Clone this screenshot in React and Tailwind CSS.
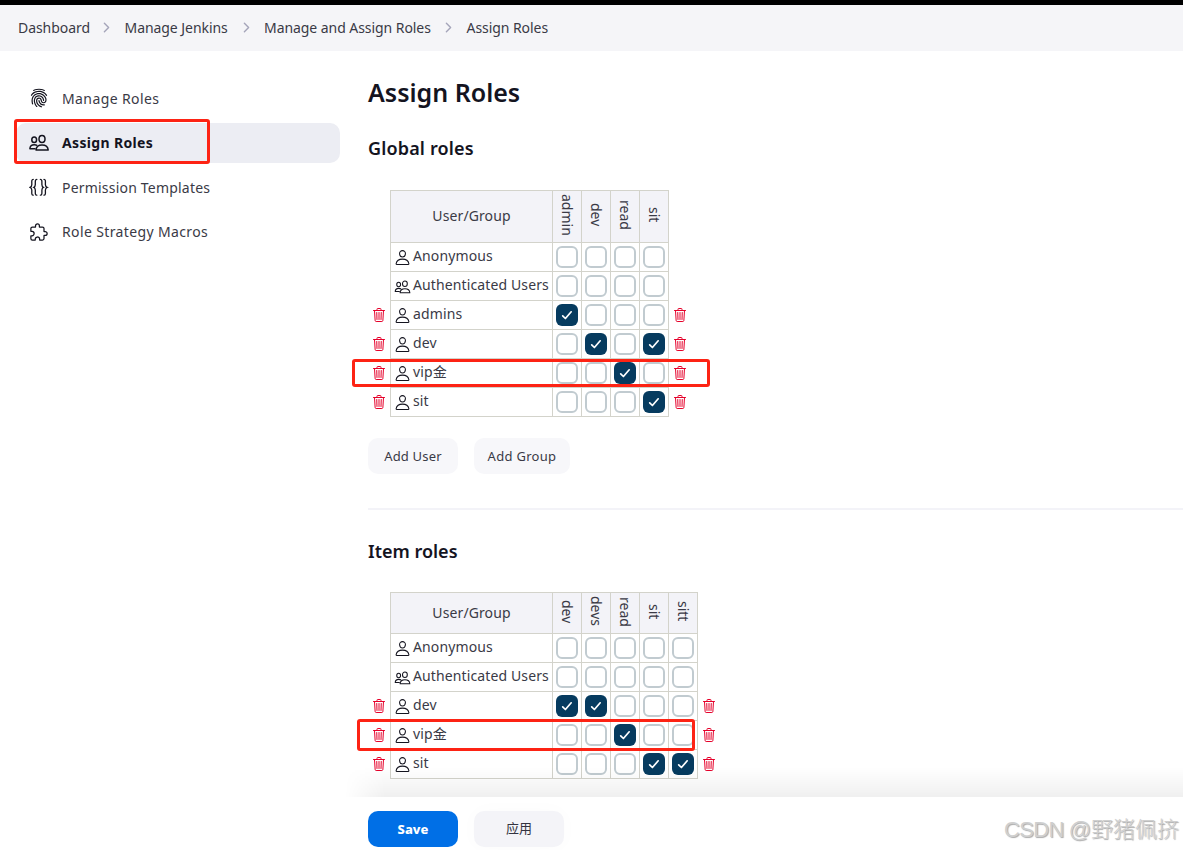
import React from 'react';
import {
  IoChevronForward,
  IoExtensionPuzzleOutline,
  IoFingerPrint,
  IoPersonOutline,
  IoTrashOutline,
} from 'react-icons/io5';

const crumbs = [
  { label: 'Dashboard', width: 'w-[71px]' },
  { label: 'Manage Jenkins', width: 'w-[104px]' },
  { label: 'Manage and Assign Roles', width: 'w-[167px]' },
  { label: 'Assign Roles', width: 'w-[82px]' },
];

const globalRoles = {
  roles: ['admin', 'dev', 'read', 'sit'],
  rows: [
    { name: 'Anonymous', builtin: true, checked: [] },
    { name: 'Authenticated Users', builtin: true, group: true, checked: [] },
    { name: 'admins', checked: ['admin'] },
    { name: 'dev', checked: ['dev', 'sit'] },
    { name: 'vip金', checked: ['read'], outline: 'left-[-16px] top-0 w-[358px] h-[28px]' },
    { name: 'sit', checked: ['sit'] },
  ],
};

const itemRoles = {
  roles: ['dev', 'devs', 'read', 'sit', 'sitt'],
  rows: [
    { name: 'Anonymous', builtin: true, checked: [] },
    { name: 'Authenticated Users', builtin: true, group: true, checked: [] },
    { name: 'dev', checked: ['dev', 'devs'] },
    { name: 'vip金', checked: ['read'], outline: 'left-[-11px] top-[-2px] w-[338px] h-[32px]' },
    { name: 'sit', checked: ['sit', 'sitt'] },
  ],
};

const BracesIcon = ({ className }) => (
  <svg viewBox="0 0 20 20" fill="none" stroke="currentColor" strokeWidth="1.3" strokeLinecap="round" className={className}>
    <path d="M4.2 2.4C2.2 2.4 2.9 5.2 2.8 7.6C2.7 9.2 2.2 9.9 1.1 10.3C2.2 10.7 2.7 11.4 2.8 13C2.9 15.4 2.2 18.2 4.2 18.2" />
    <path d="M7.8 2.4C5.8 2.4 6.4 5.2 6.3 7.6C6.2 9.2 5.8 9.9 4.9 10.3C5.8 10.7 6.2 11.4 6.3 13C6.4 15.4 5.8 18.2 7.8 18.2" />
    <path d="M11.4 2.4C13.4 2.4 12.8 5.2 12.9 7.6C13 9.2 13.4 9.9 14.3 10.3C13.4 10.7 13 11.4 12.9 13C12.8 15.4 13.4 18.2 11.4 18.2" />
    <path d="M15 2.4C17 2.4 16.3 5.2 16.4 7.6C16.5 9.2 17 9.9 18.1 10.3C17 10.7 16.5 11.4 16.4 13C16.3 15.4 17 18.2 15 18.2" />
  </svg>
);

const UsersIcon = ({ className, strokeWidth = 1.5 }) => (
  <svg viewBox="0 0 20 20" fill="none" stroke="currentColor" strokeWidth={strokeWidth} strokeLinejoin="round" className={className}>
    <ellipse cx="13" cy="6" rx="3" ry="3.5" />
    <ellipse cx="5.2" cy="6.8" rx="2.4" ry="2.8" />
    <path d="M7 17.1C7.2 14 9.6 12.1 13 12.1S19 14 19.2 17.1Z" />
    <path d="M6.6 15.7H0.9C1 13.1 2.9 11.7 5.2 11.7C6.4 11.7 7.4 11.9 8.3 12.5" />
  </svg>
);

const Outline = ({ className }) => (
  <div className={`absolute z-10 rounded-[3px] border-3 border-[#fd2314] pointer-events-none ${className}`} />
);

const TaskLink = ({ icon, label, active, tracking = 'tracking-[0.4px]' }) => (
  <a
    className={`relative flex items-center h-10 pl-[13px] gap-[13px] rounded-[10px] text-[14px] ${tracking} ${
      active ? 'bg-[#ecedf3] font-bold text-[#14141f]' : 'text-[#3a3a46]'
    }`}
  >
    <span className="w-5 h-5 text-[#14141f]">{icon}</span>
    <span className="whitespace-nowrap">{label}</span>
    {active && <Outline className="-left-[2px] top-[-4px] w-[196px] h-[45px]" />}
  </a>
);

const RoleCheckbox = ({ checked }) =>
  checked ? (
    <span className="w-[22px] h-[22px] rounded-[6px] bg-[#063b5f] flex items-center justify-center">
      <svg viewBox="0 0 22 22" fill="none" stroke="white" strokeWidth="1.7" strokeLinecap="round" strokeLinejoin="round" className="w-[22px] h-[22px]">
        <path d="M6.7 11.8L9.4 14.5L15.2 7.8" />
      </svg>
    </span>
  ) : (
    <span className="w-[22px] h-[22px] rounded-[6px] border-2 border-[#c1cbd0] bg-white" />
  );

const Trash = ({ hidden }) => (
  <div className="w-[22px] pb-px flex items-center justify-center text-[#e6002a]">
    {!hidden && <IoTrashOutline className="w-4 h-4" />}
  </div>
);

const RoleTable = ({ data, headerClass }) => (
  <div className="flex flex-col">
    <div className={`flex pl-[22px] text-[#3a3a46] ${headerClass}`}>
      <div className="w-[163px] pb-0.5 border border-[#d3d3cb] bg-[#f3f3f8] flex items-center justify-center text-[14px] tracking-[0.1px]">
        User/Group
      </div>
      {data.roles.map((role) => (
        <div key={role} className="w-[29px] pb-[3px] border-y border-r border-[#d3d3cb] bg-[#f3f3f8] flex items-center justify-center">
          <span className="[writing-mode:vertical-rl] text-[14px] leading-[20px]">{role}</span>
        </div>
      ))}
    </div>
    {data.rows.map((row) => (
      <div key={row.name} className="relative flex h-[29px]">
        <Trash hidden={row.builtin} />
        <div className="w-[163px] border-x border-b border-[#d3d3cb] flex items-center pl-[3px] gap-[2px] text-[#3a3a46]">
          {row.group ? (
            <UsersIcon className="w-[17px] h-4 text-[#14141f] mt-0.5 shrink-0" strokeWidth={1.3} />
          ) : (
            <IoPersonOutline className="w-[17px] h-[17px] text-[#14141f] shrink-0" />
          )}
          <span className="pb-0.5 text-[14px] leading-5 tracking-[0.12px] whitespace-nowrap">{row.name}</span>
        </div>
        {data.roles.map((role) => (
          <div key={role} className="w-[29px] border-r border-b border-[#d3d3cb] flex items-center justify-center">
            <RoleCheckbox checked={row.checked.includes(role)} />
          </div>
        ))}
        <Trash hidden={row.builtin} />
        {row.outline && <Outline className={row.outline} />}
      </div>
    ))}
  </div>
);

const App = () => {
  return (
    <div className="relative w-[1183px] h-[850px] overflow-hidden bg-white flex flex-col font-['Noto_Sans','Noto_Sans_CJK_SC',sans-serif] text-[#14141f]">
      <nav className="h-[51px] shrink-0 border-t-5 border-black bg-[#f5f5f8] flex items-center pl-[18px] pb-0.5 text-[14px] text-[#3a3a46]">
        {crumbs.map((crumb, i) => (
          <React.Fragment key={crumb.label}>
            {i > 0 && (
              <span className="w-[35.5px] flex justify-center">
                <IoChevronForward className="w-[15px] h-[15px] text-[#a5a5ba]" />
              </span>
            )}
            <a className={`${crumb.width} whitespace-nowrap tracking-[-0.06px]`}>{crumb.label}</a>
          </React.Fragment>
        ))}
      </nav>

      <div className="flex flex-1 min-h-0">
        <aside className="w-[368px] shrink-0 pl-4 pr-7 pt-[27px] flex flex-col gap-[4.5px]">
          <TaskLink icon={<IoFingerPrint className="w-5 h-5" />} label="Manage Roles" />
          <TaskLink icon={<UsersIcon className="w-5 h-5" />} label="Assign Roles" tracking="tracking-[0.35px]" active />
          <TaskLink icon={<BracesIcon className="w-5 h-5" />} label="Permission Templates" tracking="tracking-[0.2px]" />
          <TaskLink icon={<IoExtensionPuzzleOutline className="w-5 h-5" />} label="Role Strategy Macros" tracking="tracking-[0.37px]" />
        </aside>

        <main className="flex-1 pt-[23px]">
          <h1 className="text-[25px] leading-9 font-semibold">Assign Roles</h1>
          <h2 className="mt-6 text-[18px] leading-7 font-semibold tracking-[0.15px]">Global roles</h2>
          <div className="mt-7">
            <RoleTable data={globalRoles} headerClass="h-[53px]" />
          </div>
          <div className="mt-[21px] flex gap-4 text-[13px] text-[#3a3a46]">
            <button className="w-[90px] h-9 pt-px rounded-[10px] bg-[#f7f7fa] tracking-[0.2px]">Add User</button>
            <button className="w-[96px] h-9 pt-px rounded-[10px] bg-[#f7f7fa] tracking-[0.3px]">Add Group</button>
          </div>
          <hr className="mt-[34px] border-t-2 border-[#f3f3f8]" />
          <h2 className="mt-[27px] text-[18px] leading-7 font-semibold">Item roles</h2>
          <div className="mt-[27px]">
            <RoleTable data={itemRoles} headerClass="h-[42px]" />
          </div>
        </main>
      </div>

      {/* Sticky save bar with its fade */}
      <div className="absolute left-[345px] right-0 bottom-0">
        <div className="h-[30px] bg-linear-to-b from-transparent to-black/6 [mask-image:linear-gradient(to_right,transparent,black_40px)]" />
        <div className="h-[53px] bg-white flex items-start gap-4 pl-[23px] pt-[14px] text-[13px]">
          <button className="w-[90px] h-9 pt-px rounded-[10px] bg-[#006fe6] text-white font-extrabold">Save</button>
          <button className="w-[90px] h-9 rounded-[10px] bg-[#f4f4f8] text-[#333340] shadow-[0_0_20px_rgba(0,0,0,0.02)]">应用</button>
        </div>
      </div>
      <div className="absolute right-1 bottom-[4px] text-[22px] leading-8 whitespace-nowrap text-[#cfcfcf] font-['Liberation_Sans','Noto_Sans_CJK_SC',sans-serif] font-light [text-shadow:1px_1px_1px_#aaa]">
        <span className="inline-block tracking-[-0.7px] mr-[5px]">CSDN</span>
        <span>@野猪佩挤</span>
      </div>
    </div>
  );
};

export default App;
